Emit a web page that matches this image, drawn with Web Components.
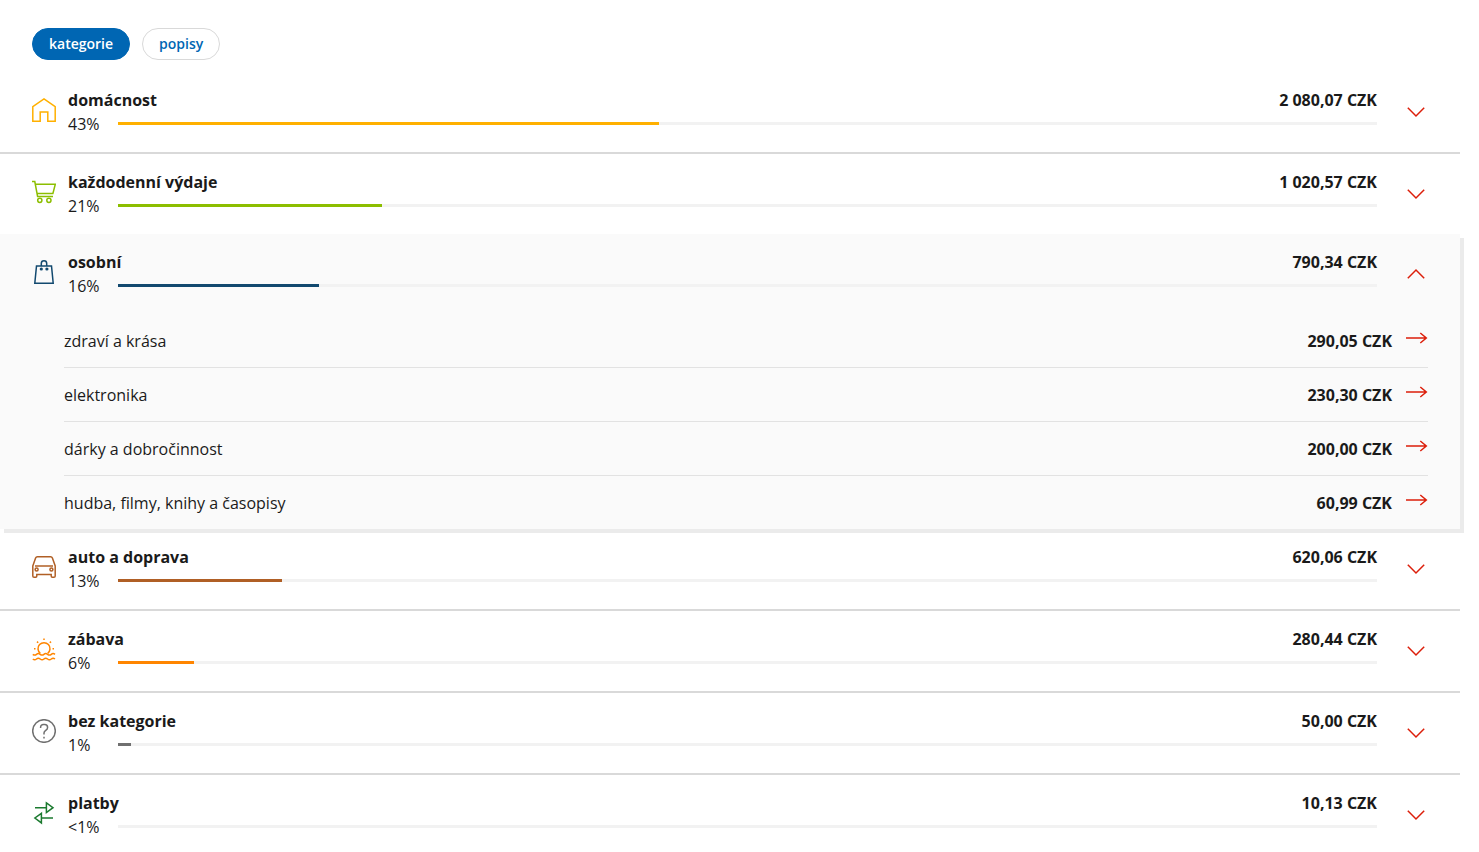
<!DOCTYPE html>
<html lang="cs">
<head>
  <meta charset="utf-8">
  <meta name="viewport" content="width=device-width, initial-scale=1">
  <title>Výdaje podle kategorií</title>
  <style>
    body {
      margin: 0;
      background: #fff;
      color: #1a1a1a;
      font: 16px/24px "Open Sans", "Noto Sans", sans-serif;
    }
  </style>
</head>
<body>
  <spending-overview>
    <filter-pill slot="filters" active>kategorie</filter-pill>
    <filter-pill slot="filters">popisy</filter-pill>

    <category-row icon="home" percent="43" color="#ffb000">
      domácnost
      <span slot="amount">2&nbsp;080,07 CZK</span>
    </category-row>
    <category-row icon="cart" percent="21" color="#8cbe00">
      každodenní výdaje
      <span slot="amount">1&nbsp;020,57 CZK</span>
    </category-row>
    <category-row icon="bag" percent="16" color="#12496f" open>
      osobní
      <span slot="amount">790,34 CZK</span>
      <sub-category slot="items">zdraví a krása<span slot="amount">290,05 CZK</span></sub-category>
      <sub-category slot="items">elektronika<span slot="amount">230,30 CZK</span></sub-category>
      <sub-category slot="items">dárky a dobročinnost<span slot="amount">200,00 CZK</span></sub-category>
      <sub-category slot="items">hudba, filmy, knihy a časopisy<span slot="amount">60,99 CZK</span></sub-category>
    </category-row>
    <category-row icon="car" percent="13" color="#b05f25">
      auto a doprava
      <span slot="amount">620,06 CZK</span>
    </category-row>
    <category-row icon="sun" percent="6" color="#ff8500">
      zábava
      <span slot="amount">280,44 CZK</span>
    </category-row>
    <category-row icon="question" percent="1" color="#707070">
      bez kategorie
      <span slot="amount">50,00 CZK</span>
    </category-row>
    <category-row icon="transfer" percent="0" color="#1b7a2f">
      platby
      <span slot="amount">10,13 CZK</span>
    </category-row>
  </spending-overview>

  <script>
    const ICONS = {
      home: `<path d="M.8 23.2V8.6L12 .9l11.2 7.7v14.6h-7.4V14H8.2v9.2z"/>`,
      cart: `<path d="M0 1.5h2.8L5.6 16.4H21M3.3 4.3h20l-2.4 9.2H5.2"/>
        <circle cx="7.8" cy="20.3" r="2.1"/><circle cx="16.9" cy="20.3" r="2.1"/>`,
      bag: `<path d="M4.5 6h15l1.7 17.2H2.8z"/>
        <path d="M9.3 6V3.5a2.7 2.7 0 0 1 5.4 0V6"/>
        <g fill="currentColor" stroke="none"><circle cx="9.3" cy="9" r="1.6"/><circle cx="14.9" cy="9" r="1.6"/></g>`,
      car: `<path d="M.8 11 3.6 3Q4.1 1.7 5.4 1.7h13.2q1.3 0 1.8 1.3l2.8 8v10q0 1.3-1.3 1.3h-1.600q-1.100 0-1.100-1.200v-1.500H4.800v1.500q0 1.200-1.100 1.200H2.100Q.8 22.300.8 21z"/>
        <path d="M3 11h18"/>
        <circle cx="4.600" cy="14.400" r="1.500"/><circle cx="19.400" cy="14.400" r="1.500"/>`,
      sun: `<path d="M8.300 16.400a6 6 0 1 1 7.400 0"/>
        <path d="M.8 17.300q1.900 1.500 3.700 0t3.700 0 3.700 0 3.700 0 3.700 0 3.700 0M.8 22q1.900 1.500 3.700 0t3.700 0 3.700 0 3.700 0 3.700 0 3.700 0"/>
        <path d="M12 1.400V3M5 4.600l1.200 1.200M19 4.600l-1.200 1.200M2 11.800h1.500M20.500 11.800H22"/>`,
      question: `<circle cx="12" cy="12" r="11.300"/>
        <path d="M8.600 9V8.200A2.700 2.700 0 0 1 11.300 5.500h1.400a2.900 2.900 0 0 1 2.900 2.900c0 3.200-3.600 2.700-3.600 5.600v1.400M12 17.800v1.600"/>`,
      transfer: `<path d="M3 6.700h11.300M14.400 1.900 21 6.700l-6.600 4.900zM21 17H9.500M9.400 12.300 2.900 17l6.500 4.900z"/>`,
    };

    class FilterPill extends HTMLElement {
      constructor() {
        super();
        this.attachShadow({ mode: "open" });
      }

      connectedCallback() {
        const active = this.hasAttribute("active");
        this.shadowRoot.innerHTML = `
          <style>
            :host { display: block; }
            button {
              display: block;
              box-sizing: border-box;
              height: 32px;
              padding: 0 16px;
              border: 1px solid #d9d9d9;
              border-radius: 16px;
              background: #fff;
              color: #0066b3;
              font: 600 14px/30px "Open Sans", "Noto Sans", sans-serif;
              cursor: pointer;
            }
            :host([active]) button {
              border-color: #0066b3;
              background: #0066b3;
              color: #fff;
            }
          </style>
          <button type="button" aria-pressed="${active}"><slot></slot></button>
        `;
      }
    }
    customElements.define("filter-pill", FilterPill);

    class SubCategory extends HTMLElement {
      constructor() {
        super();
        this.attachShadow({ mode: "open" });
      }

      connectedCallback() {
        this.shadowRoot.innerHTML = `
          <style>
            :host {
              display: block;
              border-bottom: 1px solid #e2e2e2;
            }
            :host(:last-of-type) { border-bottom: 0; }
            a {
              display: flex;
              align-items: center;
              gap: 12px;
              height: 53px;
              color: inherit;
              text-decoration: none;
            }
            .name { flex: 1; }
            .amount { font-weight: 700; }
            svg {
              width: 24px;
              height: 24px;
              fill: none;
              stroke: #dc1e0a;
              stroke-width: 1.5;
            }
          </style>
          <a href="#">
            <span class="name"><slot></slot></span>
            <span class="amount"><slot name="amount"></slot></span>
            <svg viewBox="0 0 24 24" aria-hidden="true"><path d="M2 9h20.500M16.300 4l6 5-6 5"/></svg>
          </a>
        `;
      }
    }
    customElements.define("sub-category", SubCategory);

    class CategoryRow extends HTMLElement {
      constructor() {
        super();
        this.attachShadow({ mode: "open" });
      }

      connectedCallback() {
        this.render();
        this.shadowRoot.addEventListener("click", (e) => {
          if (e.target.closest("button")) {
            this.toggleAttribute("open");
            this.render();
          }
        });
      }

      render() {
        const percent = Number(this.getAttribute("percent"));
        const open = this.hasAttribute("open");
        this.shadowRoot.innerHTML = `
          <style>
            :host {
              display: block;
              border-bottom: 2px solid #d9d9d9;
              --accent: ${this.getAttribute("color")};
            }
            :host(:last-of-type) { border-bottom: 0; }
            /* the open row lies over the line of the row above it */
            :host([open]) {
              position: relative;
              margin-top: -2px;
              border-bottom: 0;
              background: #fafafa;
              box-shadow: 4px 4px 0 #ebebeb;
            }
            .head {
              display: flex;
              padding: 16px 32px;
            }
            .icon {
              width: 24px;
              height: 24px;
              margin: 10px 12px 0 0;
              fill: none;
              color: var(--accent);
              stroke: currentColor;
              stroke-width: 1.5;
            }
            .body {
              flex: 1;
              display: grid;
              grid-template-columns: 50px 1fr auto;
            }
            .name { grid-column: 1 / 3; }
            .name,
            .amount { font-weight: 700; }
            .track {
              grid-column: 2 / 4;
              height: 3px;
              margin-top: 10px;
              background: #f2f2f2;
            }
            .fill {
              width: ${percent}%;
              height: 100%;
              background: var(--accent);
            }
            button {
              align-self: center;
              width: 24px;
              height: 24px;
              margin-left: 27px;
              padding: 0;
              border: 0;
              background: none;
              cursor: pointer;
            }
            button svg {
              display: block;
              fill: none;
              stroke: #dc1e0a;
              stroke-width: 1.5;
            }
            :host([open]) button svg { transform: rotate(180deg); }
            .items {
              display: none;
              padding: 0 32px 0 64px;
            }
            :host([open]) .items { display: block; }
          </style>
          <div class="head">
            <svg class="icon" viewBox="0 0 24 24" aria-hidden="true">${ICONS[this.getAttribute("icon")]}</svg>
            <div class="body">
              <span class="name" id="name"><slot></slot></span>
              <span class="amount"><slot name="amount"></slot></span>
              <span class="percent">${percent < 1 ? "&lt;1" : percent}%</span>
              <div class="track" role="progressbar" aria-labelledby="name" aria-valuenow="${percent}">
                <div class="fill"></div>
              </div>
            </div>
            <button type="button" aria-labelledby="name" aria-expanded="${open}">
              <svg width="24" height="24" viewBox="0 0 24 24"><path d="M3.800 7.800 12 16l8.200-8.200"/></svg>
            </button>
          </div>
          <div class="items"><slot name="items"></slot></div>
        `;
      }
    }
    customElements.define("category-row", CategoryRow);

    class SpendingOverview extends HTMLElement {
      constructor() {
        super();
        this.attachShadow({ mode: "open" });
      }

      connectedCallback() {
        this.shadowRoot.innerHTML = `
          <style>
            :host {
              display: block;
              margin-right: 19px;
            }
            .filters {
              display: flex;
              gap: 12px;
              padding: 28px 32px 12px;
            }
          </style>
          <div class="filters"><slot name="filters"></slot></div>
          <slot></slot>
        `;
      }
    }
    customElements.define("spending-overview", SpendingOverview);
  </script>
</body>
</html>
